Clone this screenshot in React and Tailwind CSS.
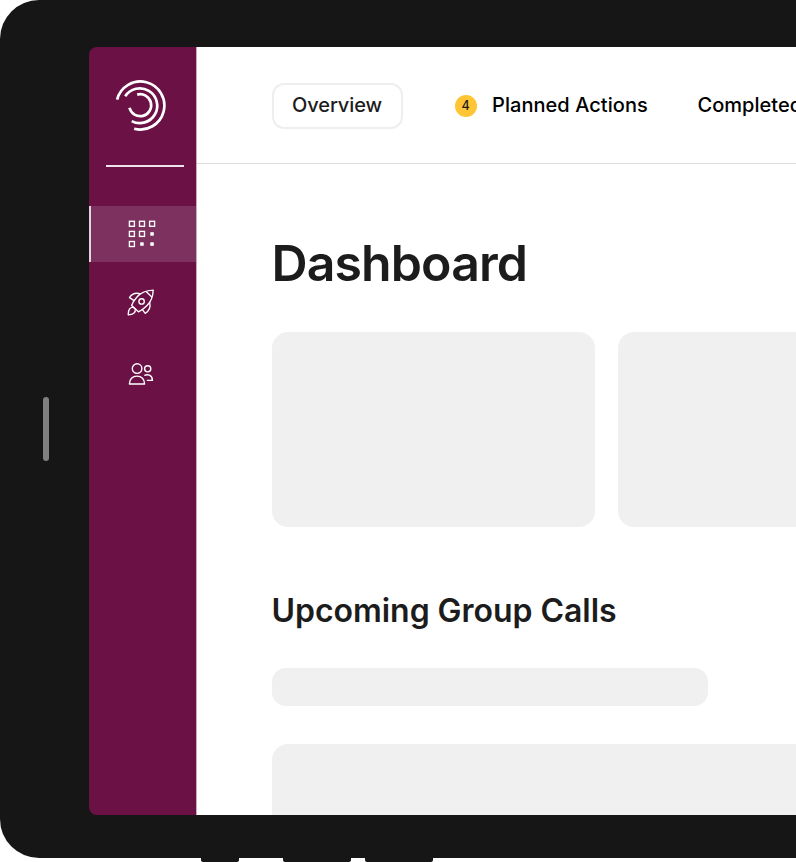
const FONT = "font-['Inter','Liberation_Sans',sans-serif]";

function Logo() {
  return (
    <svg width="52" height="52" viewBox="0 0 52 52" fill="none" stroke="#fff" strokeWidth="2.7">
      <path d="M3.1 19.6A24 24 0 1 1 20.2 48.7" />
      <path d="M11.2 16.3A17.4 17.4 0 1 1 17.7 41.1" />
      <path d="M23.2 14.6A11 11 0 1 1 15.5 27.8" />
    </svg>
  );
}

function GridIcon() {
  const open = [[0, 0], [1, 0], [2, 0], [0, 1], [1, 1], [0, 2]];
  const dots = [[2, 1], [1, 2], [2, 2]];
  return (
    <svg width="29" height="28" viewBox="0 0 29 28" fill="none">
      {open.map(([c, r]) => (
        <rect key={`${c}-${r}`} x={2.4 + c * 10.1} y={1.3 + r * 10.1} width="5" height="5" stroke="#fff" strokeWidth="1.35" />
      ))}
      {dots.map(([c, r]) => (
        <rect key={`${c}-${r}`} x={3.1 + c * 10.1} y={2.1 + r * 10.1} width="3.5" height="3.5" fill="#fff" />
      ))}
    </svg>
  );
}

function RocketIcon() {
  return (
    <svg width="28" height="28" viewBox="0 0 28 28" fill="none" stroke="#fff" strokeWidth="1.35" strokeLinejoin="round" strokeLinecap="round">
      <path d="M26.2 2.2C19.4 2.6 14 4.6 10.2 8.7C7.5 11.6 5.4 14.9 4.6 17.5L11.4 23.8C14 22.6 17.2 20.5 19.8 17.8C24.1 13.6 26 8.7 26.2 2.2Z" />
      <path d="M19.6 3.9L24.6 8.7" />
      <circle cx="14.6" cy="13.4" r="2.7" />
      <path d="M13.4 5.8C8.7 4.5 4.8 5.9 2.5 9.6L7.2 12.6" />
      <path d="M22.7 14.4C23.8 19.1 22.1 23 18.2 25.3L15.4 21.6" />
      <path d="M6.6 19.4C3.2 18.9 1.1 21.6 1.2 26.8C6 26.8 9 24.7 8.2 21Z" />
    </svg>
  );
}

function PeopleIcon() {
  return (
    <svg width="28" height="24" viewBox="0 0 28 24" fill="none" stroke="#fff" strokeWidth="1.4" strokeLinejoin="round">
      <circle cx="9.1" cy="6.6" r="4.8" />
      <path d="M1.4 22C1.4 17.4 4.5 14.1 9 14.1S16.6 17.4 16.6 22Z" />
      <circle cx="19.7" cy="6.8" r="3.1" />
      <path d="M16.3 13.5C19.4 11.8 24.4 12.8 24.4 18.4H18.8" />
    </svg>
  );
}

function Sidebar() {
  return (
    <aside className="flex w-[107.5px] shrink-0 flex-col items-center border-r border-[#c9a9bc] bg-[#6b1145]">
      <div className="ml-[-4px] mt-[33px] h-[52px]"><Logo /></div>
      <div className="ml-[5px] mt-[33.4px] h-[1.5px] w-[78px] bg-[#eee3ea]" />
      <nav className="mt-[39px] flex w-full flex-col">
        <a className="flex h-14 items-center border-l-[2px] border-[#e3d3de] bg-[#7d315e] pl-[36px]"><GridIcon /></a>
        <a className="mt-[26px] flex h-7 items-center pl-[38px]"><RocketIcon /></a>
        <a className="mt-[46px] flex h-6 items-center pl-[39px]"><PeopleIcon /></a>
      </nav>
    </aside>
  );
}

function Tabs() {
  return (
    <header className="flex h-[117px] shrink-0 items-start whitespace-nowrap border-b border-[#dedede] pl-[75px] pt-[36px] text-[20px] font-medium leading-[44px] text-black">
      <div className="flex h-[45.5px] w-[131px] shrink-0 items-center justify-center rounded-[12px] border-[2px] border-[#eeeeee] pb-[1px] text-[#1d1c1d]">
        <span className="tracking-[-0.1px]">Overview</span>
      </div>
      <span className="ml-[52px] mt-[12px] flex h-[22px] w-[22px] shrink-0 items-center justify-center rounded-full bg-[#ffc535] text-[12.5px] leading-none text-[#1d1c1d]">4</span>
      <span className="ml-[15.5px] w-[205.5px] shrink-0 tracking-[0.05px]">Planned Actions</span>
      <span className="shrink-0 tracking-[0.02px]">Completed</span>
    </header>
  );
}

function Dashboard() {
  return (
    <main className="flex flex-1 flex-col whitespace-nowrap pl-[75px] text-[#1d1c1d]">
      <h1 className="mt-[69px] h-[60px] text-[50px] font-semibold leading-[60px] tracking-[-0.9px]">Dashboard</h1>
      <div className="mt-[38.5px] flex shrink-0 gap-[22.5px]">
        <div className="h-[195px] w-[323.5px] shrink-0 rounded-[16px] bg-[#f0f0f0]" />
        <div className="h-[195px] w-[324px] shrink-0 rounded-[16px] bg-[#f0f0f0]" />
      </div>
      <h2 className="mt-[64.5px] h-[40px] text-[32px] font-semibold leading-[40px] tracking-[-0.04px]">Upcoming Group Calls</h2>
      <div className="mt-[37px] h-[38px] w-[436px] shrink-0 rounded-[14px] bg-[#f0f0f0]" />
      <div className="mt-[38px] h-[195px] w-[670px] shrink-0 rounded-[16px] bg-[#f0f0f0]" />
    </main>
  );
}

export default function App() {
  return (
    <div className={`h-[862px] w-[796px] overflow-hidden bg-white ${FONT}`}>
      <div className="flex h-[857.5px] rounded-l-[39px] bg-[#161616] pt-[47px]">
        <div className="flex h-[767.5px] w-[89px] shrink-0 items-start pl-[42.5px] pt-[350px]">
          <div className="h-[63.5px] w-[6.5px] rounded-full bg-[#808080]" />
        </div>
        <div className="flex h-[767.5px] min-w-0 flex-1 overflow-hidden rounded-l-[8px]">
          <Sidebar />
          <div className="flex min-w-0 flex-1 flex-col overflow-hidden bg-white">
            <Tabs />
            <Dashboard />
          </div>
        </div>
      </div>
      <div className="flex pl-[201px]">
        <div className="h-[4px] w-[38px] rounded-b-[2px] bg-[#161616]" />
        <div className="ml-[44px] h-[4px] w-[68px] rounded-b-[2px] bg-[#161616]" />
        <div className="ml-[14px] h-[4px] w-[68px] rounded-b-[2px] bg-[#161616]" />
      </div>
    </div>
  );
}
